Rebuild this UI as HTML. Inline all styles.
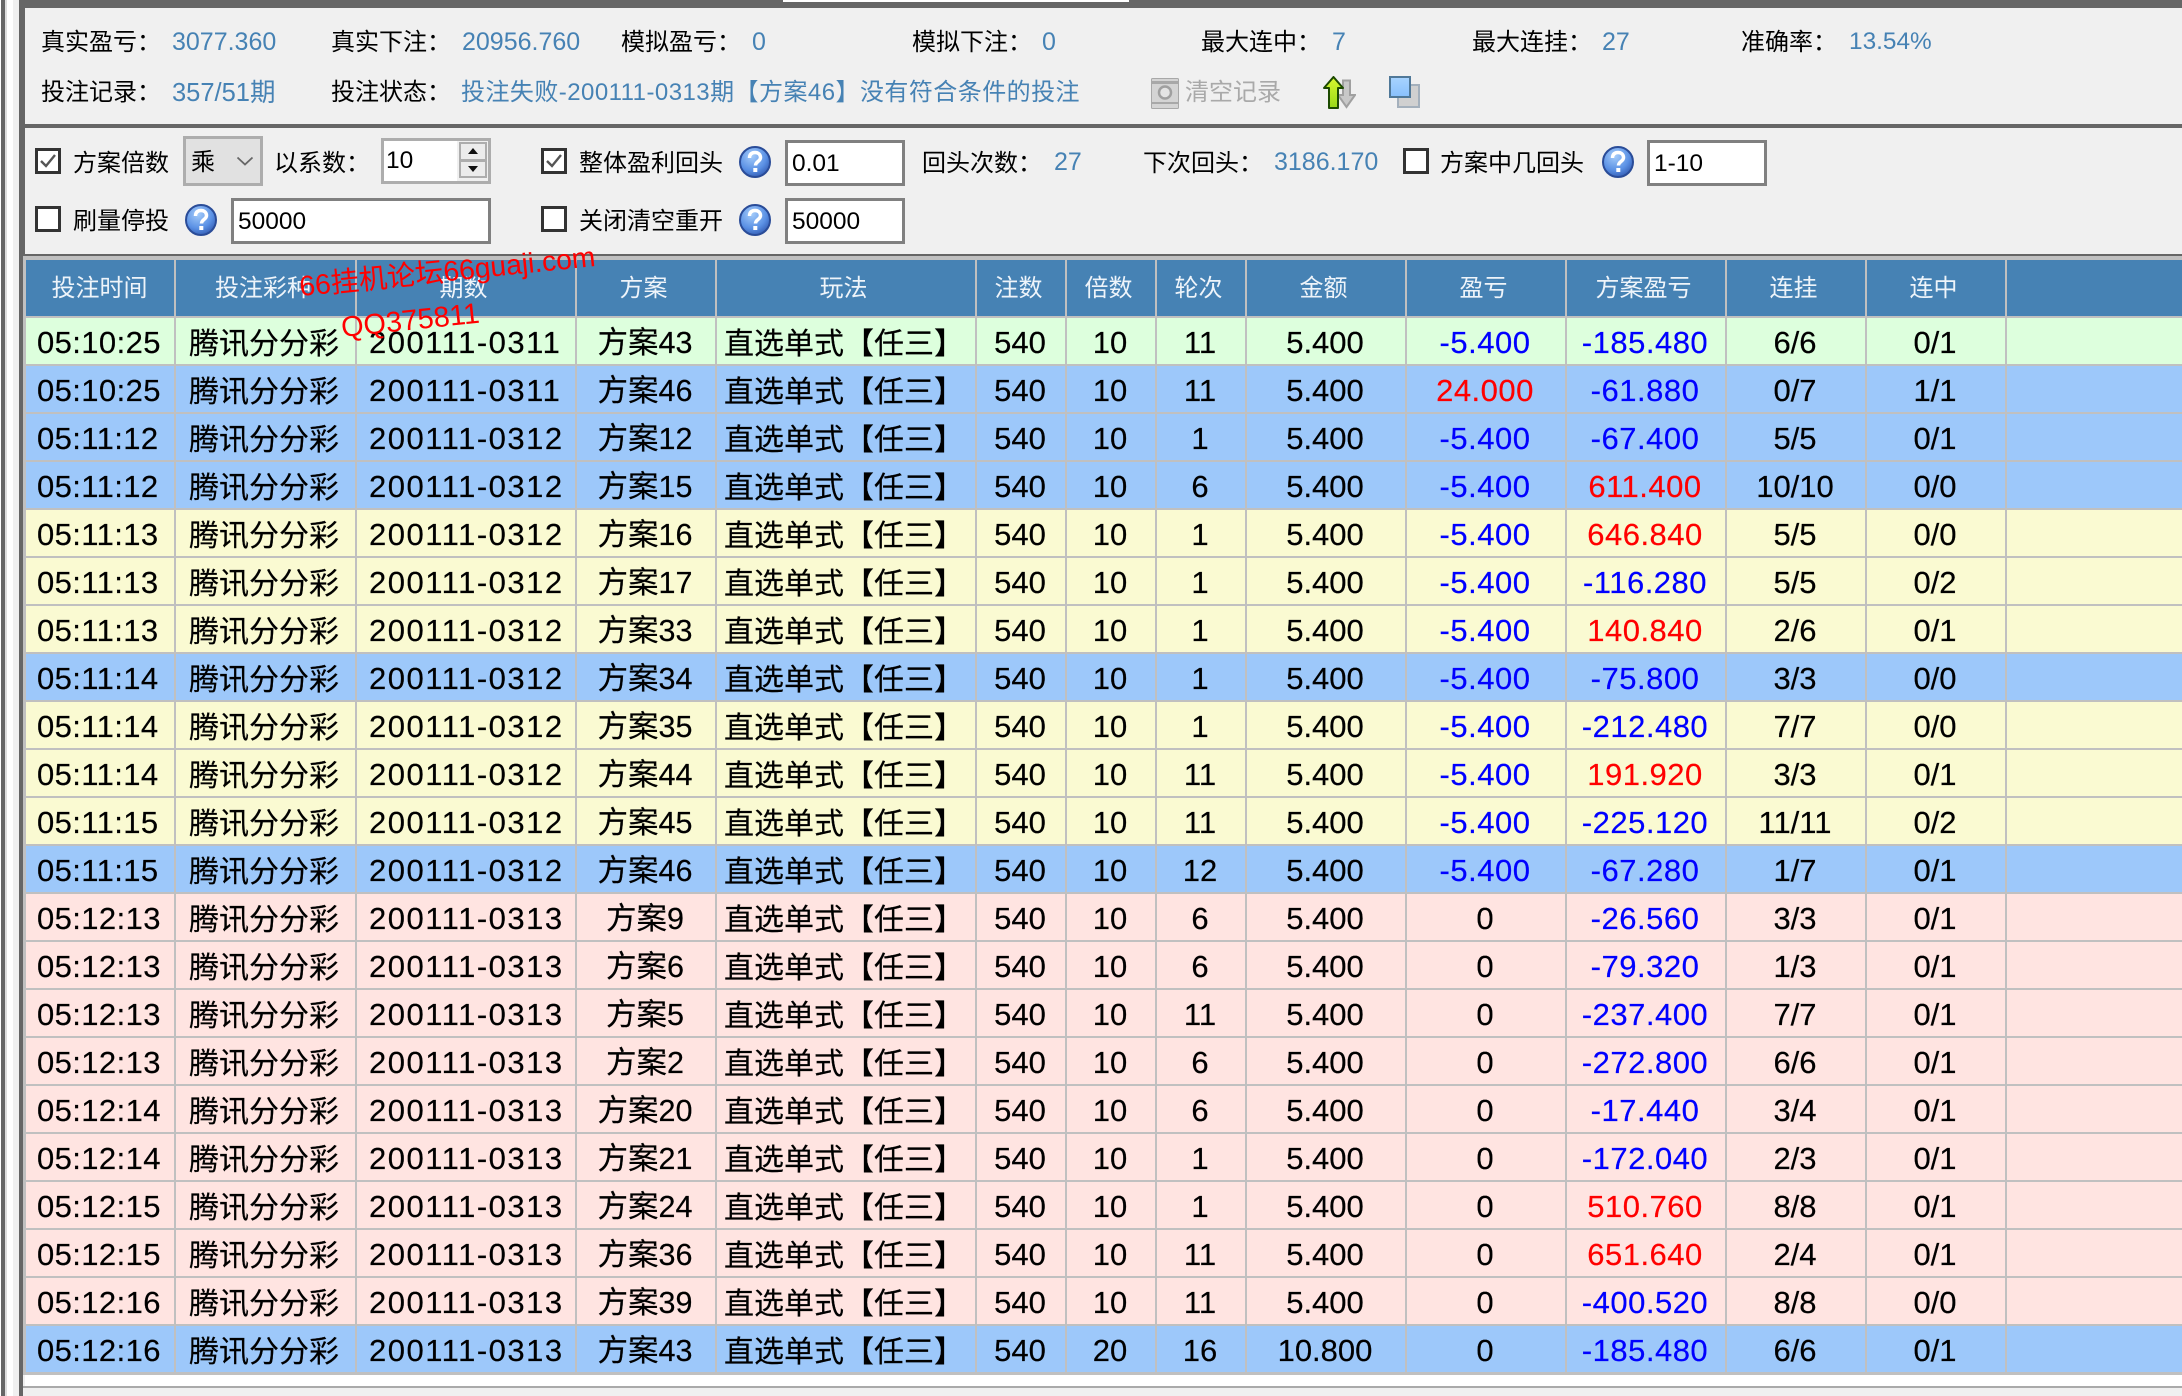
<!DOCTYPE html>
<html lang="zh">
<head>
<meta charset="utf-8">
<title>投注记录</title>
<style>
html,body{margin:0;padding:0;background:#fff}
#app{position:relative;width:2182px;height:1396px;overflow:hidden;background:#f0f0f0;font-family:"Liberation Sans","Noto Sans CJK SC",sans-serif;color:#000}
.r{position:absolute}
.t{position:absolute;white-space:nowrap;line-height:30px;height:30px;font-size:24px;margin-top:1px}
.v{color:#4682b4;font-size:25px;margin-top:0}
.cb{position:absolute;width:26px;height:26px;box-sizing:border-box;border:3px solid #333;background:#fff}
.cb svg{position:absolute;left:0;top:0}
.in{position:absolute;box-sizing:border-box;border:3px solid #808080;background:#fff;font-size:24.5px;line-height:42px;padding-left:4px;white-space:nowrap}
.help{position:absolute;width:32px;height:32px}
table{position:absolute;left:26px;top:260px;width:2156px;border-collapse:separate;border-spacing:0;table-layout:fixed}
th,td{box-sizing:border-box;padding:0;border-right:2px solid #c0c0c0;border-bottom:2px solid #c0c0c0;white-space:nowrap;overflow:hidden}
th:last-child,td:last-child{border-right:0}
th{height:58px;background:#4682b4;color:#eef4fa;font-weight:normal;font-size:24px;text-align:center;line-height:30px;padding-top:2px;padding-right:5px}
th:first-child{padding-right:1px}
td{height:48px;font-size:31px;text-align:center;padding-top:4px;padding-right:2px;line-height:42px;-webkit-text-stroke:.2px}
td.a{text-align:left;padding-left:11px;padding-right:0;font-size:31px;letter-spacing:.4px}
td.b{text-align:left;padding-left:13px;padding-right:0;font-size:30px;padding-top:7px;line-height:39px}
td.c{text-align:left;padding-left:12px;padding-right:0;font-size:31px;letter-spacing:1.5px}
td.d{font-size:30.5px}
td.e{text-align:left;padding-left:7px;padding-right:0;font-size:30px;padding-top:7px;line-height:39px}
td.n,td.o{letter-spacing:.5px}
tr.g td{background:#ddffdd}
tr.l td{background:#9dc8fa}
tr.y td{background:#fafad2}
tr.p td{background:#ffe4e1}
.n{color:#0000ff}
.o{color:#ff0000}
.w{position:absolute;color:#ff0000;line-height:32px;white-space:nowrap;transform-origin:left bottom}
</style>
</head>
<body>
<div id="app">
  <!-- left chrome -->
  <div class="r" style="left:0;top:0;width:1px;height:1396px;background:#fff"></div>
  <div class="r" style="left:1px;top:0;width:4px;height:1396px;background:#666"></div>
  <div class="r" style="left:5px;top:0;width:2px;height:1396px;background:#ddd"></div>
  <div class="r" style="left:7px;top:0;width:6px;height:1396px;background:#fff"></div>
  <div class="r" style="left:13px;top:0;width:6px;height:1396px;background:#f0f0f0"></div>
  <div class="r" style="left:19px;top:0;width:6px;height:256px;background:#666"></div>
  <div class="r" style="left:19px;top:256px;width:4px;height:1140px;background:#666"></div>
  <div class="r" style="left:23px;top:256px;width:3px;height:1119px;background:#c0c0c0"></div>
  <!-- top bar -->
  <div class="r" style="left:19px;top:0;width:2163px;height:8px;background:#666"></div>
  <div class="r" style="left:783px;top:0;width:346px;height:2px;background:#fff"></div>
  <div class="r" style="left:25px;top:124px;width:2157px;height:4px;background:#666"></div>
  <div class="r" style="left:25px;top:254px;width:2157px;height:2px;background:#666"></div>
  <div class="r" style="left:25px;top:256px;width:2157px;height:4px;background:#c0c0c0"></div>

  <!-- info row 1 -->
  <span class="t" style="left:41px;top:27px">真实盈亏：</span><span class="t v" style="left:172px;top:27px">3077.360</span>
  <span class="t" style="left:331px;top:27px">真实下注：</span><span class="t v" style="left:462px;top:27px">20956.760</span>
  <span class="t" style="left:621px;top:27px">模拟盈亏：</span><span class="t v" style="left:752px;top:27px">0</span>
  <span class="t" style="left:912px;top:27px">模拟下注：</span><span class="t v" style="left:1042px;top:27px">0</span>
  <span class="t" style="left:1201px;top:27px">最大连中：</span><span class="t v" style="left:1332px;top:27px">7</span>
  <span class="t" style="left:1472px;top:27px">最大连挂：</span><span class="t v" style="left:1602px;top:27px">27</span>
  <span class="t" style="left:1741px;top:27px">准确率：</span><span class="t v" style="left:1849px;top:27px;font-size:24.4px">13.54%</span>
  <!-- info row 2 -->
  <span class="t" style="left:41px;top:77px">投注记录：</span><span class="t v" style="left:172px;top:78px;font-size:25.5px">357/51期</span>
  <span class="t" style="left:331px;top:77px">投注状态：</span><span class="t v" style="left:461px;top:78px;font-size:24px;letter-spacing:.45px">投注失败-200111-0313期【方案46】没有符合条件的投注</span>

  <svg class="r" style="left:1151px;top:78px" width="28" height="31" viewBox="0 0 28 31">
    <rect x="0.5" y="0.5" width="27" height="30" rx="1" fill="#d4d4d4" stroke="#a8a8a8"/>
    <rect x="1" y="3" width="26" height="3" fill="#a8a8a8"/>
    <rect x="1" y="24" width="26" height="2" fill="#a8a8a8"/>
    <circle cx="14" cy="14.5" r="6" fill="#e4e4e4" stroke="#a0a0a0" stroke-width="2.5"/>
  </svg>
  <span class="t" style="left:1185px;top:77px;color:#a9a9a9">清空记录</span>

  <svg class="r" style="left:1323px;top:76px" width="33" height="33" viewBox="0 0 33 33">
    <defs>
      <linearGradient id="ga" x1="0" y1="0" x2="0" y2="1"><stop offset="0" stop-color="#d8f830"/><stop offset="1" stop-color="#98d818"/></linearGradient>
      <linearGradient id="gs" x1="0" y1="0" x2="0" y2="1"><stop offset="0" stop-color="#a8d4ff"/><stop offset="1" stop-color="#88c0fc"/></linearGradient>
      <radialGradient id="gh" cx="0.4" cy="0.3" r="0.8"><stop offset="0" stop-color="#a4ccfa"/><stop offset="0.6" stop-color="#5a90e4"/><stop offset="1" stop-color="#2a50a8"/></radialGradient>
    </defs>
    <path d="M20 3.5h7v14.5h5l-8.500 12-8.500-12h5z" transform="translate(0,1)" fill="#c8c8c8" stroke="#a0a0a0" stroke-width="2"/>
    <path d="M10.500 1L20 12h-5v20H6V12H1z" fill="url(#ga)" stroke="#1c4a00" stroke-width="2" stroke-linejoin="round"/>
  </svg>

  <svg class="r" style="left:1389px;top:76px" width="31" height="33" viewBox="0 0 31 33">
    <rect x="9" y="9" width="21" height="22" fill="#d0d0d0" stroke="#a4b0bc" stroke-width="2"/>
    <rect x="1" y="1" width="20" height="20" fill="url(#gs)" stroke="#507898" stroke-width="2"/>
  </svg>

  <!-- controls row 1 -->
  <div class="cb" style="left:35px;top:148px"><svg width="20" height="20" viewBox="0 0 20 20"><path d="M3 10l5 5 9-11" fill="none" stroke="#555" stroke-width="2.400"/></svg></div>
  <span class="t" style="left:73px;top:148px">方案倍数</span>
  <div class="r" style="left:183px;top:136px;width:80px;height:50px;box-sizing:border-box;border:3px solid #adadad;background:#e1e1e1"></div>
  <span class="t" style="left:191px;top:147px">乘</span>
  <svg class="r" style="left:236px;top:155px" width="18" height="12" viewBox="0 0 18 12"><path d="M1.500 2.500L9 9.500l7.500-7" fill="none" stroke="#666" stroke-width="1.800"/></svg>
  <span class="t" style="left:274px;top:148px">以系数：</span>
  <div class="r" style="left:381px;top:138px;width:110px;height:46px;box-sizing:border-box;border:3px solid #adadad;background:#fff"></div>
  <span class="t" style="left:386px;top:145px;font-size:24.500px">10</span>
  <div class="r" style="left:457px;top:141px;width:31px;height:40px;background:#f0f0f0"></div>
  <div class="r" style="left:459px;top:142px;width:28px;height:19px;box-sizing:border-box;border:2.500px solid #adadad;background:#ececec"></div>
  <div class="r" style="left:459px;top:160px;width:28px;height:18px;box-sizing:border-box;border:2.500px solid #adadad;background:#ececec"></div>
  <svg class="r" style="left:466px;top:147px" width="14" height="28" viewBox="0 0 14 28"><path d="M7 1l5 6H2z" fill="#111"/><path d="M2 19h10l-5 6z" fill="#111"/></svg>
  <div class="cb" style="left:541px;top:148px"><svg width="20" height="20" viewBox="0 0 20 20"><path d="M3 10l5 5 9-11" fill="none" stroke="#555" stroke-width="2.400"/></svg></div>
  <span class="t" style="left:579px;top:148px">整体盈利回头</span>
  <svg class="help" style="left:739px;top:146px" viewBox="0 0 32 32"><circle cx="16" cy="16" r="15" fill="url(#gh)" stroke="#2a4c98" stroke-width="2"/><path d="M10.500 12c0-4 2.500-5.500 5.500-5.500s5.500 1.800 5.500 5c0 4-5 4-5 8" fill="none" stroke="#fff" stroke-width="3.500"/><rect x="14.300" y="22" width="4" height="4" fill="#fff"/></svg>
  <div class="in" style="left:785px;top:140px;width:120px;height:46px">0.01</div>
  <span class="t" style="left:922px;top:148px">回头次数：</span><span class="t v" style="left:1054px;top:147px">27</span>
  <span class="t" style="left:1143px;top:148px">下次回头：</span><span class="t v" style="left:1274px;top:147px">3186.170</span>
  <div class="cb" style="left:1403px;top:148px"></div>
  <span class="t" style="left:1440px;top:148px">方案中几回头</span>
  <svg class="help" style="left:1602px;top:146px" viewBox="0 0 32 32"><circle cx="16" cy="16" r="15" fill="url(#gh)" stroke="#2a4c98" stroke-width="2"/><path d="M10.500 12c0-4 2.500-5.500 5.500-5.500s5.500 1.800 5.500 5c0 4-5 4-5 8" fill="none" stroke="#fff" stroke-width="3.500"/><rect x="14.300" y="22" width="4" height="4" fill="#fff"/></svg>
  <div class="in" style="left:1647px;top:140px;width:120px;height:46px">1-10</div>

  <!-- controls row 2 -->
  <div class="cb" style="left:35px;top:206px"></div>
  <span class="t" style="left:73px;top:206px">刷量停投</span>
  <svg class="help" style="left:185px;top:204px" viewBox="0 0 32 32"><circle cx="16" cy="16" r="15" fill="url(#gh)" stroke="#2a4c98" stroke-width="2"/><path d="M10.500 12c0-4 2.500-5.500 5.500-5.500s5.500 1.800 5.500 5c0 4-5 4-5 8" fill="none" stroke="#fff" stroke-width="3.500"/><rect x="14.300" y="22" width="4" height="4" fill="#fff"/></svg>
  <div class="in" style="left:231px;top:198px;width:260px;height:46px">50000</div>
  <div class="cb" style="left:541px;top:206px"></div>
  <span class="t" style="left:579px;top:206px">关闭清空重开</span>
  <svg class="help" style="left:739px;top:204px" viewBox="0 0 32 32"><circle cx="16" cy="16" r="15" fill="url(#gh)" stroke="#2a4c98" stroke-width="2"/><path d="M10.500 12c0-4 2.500-5.500 5.500-5.500s5.500 1.800 5.500 5c0 4-5 4-5 8" fill="none" stroke="#fff" stroke-width="3.500"/><rect x="14.300" y="22" width="4" height="4" fill="#fff"/></svg>
  <div class="in" style="left:785px;top:198px;width:120px;height:46px">50000</div>

  <!-- white strip under table -->
  <div class="r" style="left:25px;top:1374px;width:2157px;height:1px;background:#c0c0c0"></div>
  <div class="r" style="left:25px;top:1375px;width:2157px;height:11px;background:#fff"></div>
  <div class="r" style="left:23px;top:1386px;width:2159px;height:2px;background:#aaa"></div>

  <table>
    <colgroup>
      <col style="width:150px"><col style="width:181px"><col style="width:220px"><col style="width:140px"><col style="width:260px"><col style="width:90px"><col style="width:90px"><col style="width:90px"><col style="width:160px"><col style="width:160px"><col style="width:160px"><col style="width:140px"><col style="width:140px"><col>
    </colgroup>
    <thead><tr><th>投注时间</th><th>投注彩种</th><th>期数</th><th>方案</th><th>玩法</th><th>注数</th><th>倍数</th><th>轮次</th><th>金额</th><th>盈亏</th><th>方案盈亏</th><th>连挂</th><th>连中</th><th></th></tr></thead>
    <tbody>
      <tr class="g"><td class="a">05:10:25</td><td class="b">腾讯分分彩</td><td class="c">200111-0311</td><td class="d">方案43</td><td class="e">直选单式【任三】</td><td>540</td><td>10</td><td>11</td><td>5.400</td><td class="n">-5.400</td><td class="n">-185.480</td><td>6/6</td><td>0/1</td><td></td></tr>
      <tr class="l"><td class="a">05:10:25</td><td class="b">腾讯分分彩</td><td class="c">200111-0311</td><td class="d">方案46</td><td class="e">直选单式【任三】</td><td>540</td><td>10</td><td>11</td><td>5.400</td><td class="o">24.000</td><td class="n">-61.880</td><td>0/7</td><td>1/1</td><td></td></tr>
      <tr class="l"><td class="a">05:11:12</td><td class="b">腾讯分分彩</td><td class="c">200111-0312</td><td class="d">方案12</td><td class="e">直选单式【任三】</td><td>540</td><td>10</td><td>1</td><td>5.400</td><td class="n">-5.400</td><td class="n">-67.400</td><td>5/5</td><td>0/1</td><td></td></tr>
      <tr class="l"><td class="a">05:11:12</td><td class="b">腾讯分分彩</td><td class="c">200111-0312</td><td class="d">方案15</td><td class="e">直选单式【任三】</td><td>540</td><td>10</td><td>6</td><td>5.400</td><td class="n">-5.400</td><td class="o">611.400</td><td>10/10</td><td>0/0</td><td></td></tr>
      <tr class="y"><td class="a">05:11:13</td><td class="b">腾讯分分彩</td><td class="c">200111-0312</td><td class="d">方案16</td><td class="e">直选单式【任三】</td><td>540</td><td>10</td><td>1</td><td>5.400</td><td class="n">-5.400</td><td class="o">646.840</td><td>5/5</td><td>0/0</td><td></td></tr>
      <tr class="y"><td class="a">05:11:13</td><td class="b">腾讯分分彩</td><td class="c">200111-0312</td><td class="d">方案17</td><td class="e">直选单式【任三】</td><td>540</td><td>10</td><td>1</td><td>5.400</td><td class="n">-5.400</td><td class="n">-116.280</td><td>5/5</td><td>0/2</td><td></td></tr>
      <tr class="y"><td class="a">05:11:13</td><td class="b">腾讯分分彩</td><td class="c">200111-0312</td><td class="d">方案33</td><td class="e">直选单式【任三】</td><td>540</td><td>10</td><td>1</td><td>5.400</td><td class="n">-5.400</td><td class="o">140.840</td><td>2/6</td><td>0/1</td><td></td></tr>
      <tr class="l"><td class="a">05:11:14</td><td class="b">腾讯分分彩</td><td class="c">200111-0312</td><td class="d">方案34</td><td class="e">直选单式【任三】</td><td>540</td><td>10</td><td>1</td><td>5.400</td><td class="n">-5.400</td><td class="n">-75.800</td><td>3/3</td><td>0/0</td><td></td></tr>
      <tr class="y"><td class="a">05:11:14</td><td class="b">腾讯分分彩</td><td class="c">200111-0312</td><td class="d">方案35</td><td class="e">直选单式【任三】</td><td>540</td><td>10</td><td>1</td><td>5.400</td><td class="n">-5.400</td><td class="n">-212.480</td><td>7/7</td><td>0/0</td><td></td></tr>
      <tr class="y"><td class="a">05:11:14</td><td class="b">腾讯分分彩</td><td class="c">200111-0312</td><td class="d">方案44</td><td class="e">直选单式【任三】</td><td>540</td><td>10</td><td>11</td><td>5.400</td><td class="n">-5.400</td><td class="o">191.920</td><td>3/3</td><td>0/1</td><td></td></tr>
      <tr class="y"><td class="a">05:11:15</td><td class="b">腾讯分分彩</td><td class="c">200111-0312</td><td class="d">方案45</td><td class="e">直选单式【任三】</td><td>540</td><td>10</td><td>11</td><td>5.400</td><td class="n">-5.400</td><td class="n">-225.120</td><td>11/11</td><td>0/2</td><td></td></tr>
      <tr class="l"><td class="a">05:11:15</td><td class="b">腾讯分分彩</td><td class="c">200111-0312</td><td class="d">方案46</td><td class="e">直选单式【任三】</td><td>540</td><td>10</td><td>12</td><td>5.400</td><td class="n">-5.400</td><td class="n">-67.280</td><td>1/7</td><td>0/1</td><td></td></tr>
      <tr class="p"><td class="a">05:12:13</td><td class="b">腾讯分分彩</td><td class="c">200111-0313</td><td class="d">方案9</td><td class="e">直选单式【任三】</td><td>540</td><td>10</td><td>6</td><td>5.400</td><td>0</td><td class="n">-26.560</td><td>3/3</td><td>0/1</td><td></td></tr>
      <tr class="p"><td class="a">05:12:13</td><td class="b">腾讯分分彩</td><td class="c">200111-0313</td><td class="d">方案6</td><td class="e">直选单式【任三】</td><td>540</td><td>10</td><td>6</td><td>5.400</td><td>0</td><td class="n">-79.320</td><td>1/3</td><td>0/1</td><td></td></tr>
      <tr class="p"><td class="a">05:12:13</td><td class="b">腾讯分分彩</td><td class="c">200111-0313</td><td class="d">方案5</td><td class="e">直选单式【任三】</td><td>540</td><td>10</td><td>11</td><td>5.400</td><td>0</td><td class="n">-237.400</td><td>7/7</td><td>0/1</td><td></td></tr>
      <tr class="p"><td class="a">05:12:13</td><td class="b">腾讯分分彩</td><td class="c">200111-0313</td><td class="d">方案2</td><td class="e">直选单式【任三】</td><td>540</td><td>10</td><td>6</td><td>5.400</td><td>0</td><td class="n">-272.800</td><td>6/6</td><td>0/1</td><td></td></tr>
      <tr class="p"><td class="a">05:12:14</td><td class="b">腾讯分分彩</td><td class="c">200111-0313</td><td class="d">方案20</td><td class="e">直选单式【任三】</td><td>540</td><td>10</td><td>6</td><td>5.400</td><td>0</td><td class="n">-17.440</td><td>3/4</td><td>0/1</td><td></td></tr>
      <tr class="p"><td class="a">05:12:14</td><td class="b">腾讯分分彩</td><td class="c">200111-0313</td><td class="d">方案21</td><td class="e">直选单式【任三】</td><td>540</td><td>10</td><td>1</td><td>5.400</td><td>0</td><td class="n">-172.040</td><td>2/3</td><td>0/1</td><td></td></tr>
      <tr class="p"><td class="a">05:12:15</td><td class="b">腾讯分分彩</td><td class="c">200111-0313</td><td class="d">方案24</td><td class="e">直选单式【任三】</td><td>540</td><td>10</td><td>1</td><td>5.400</td><td>0</td><td class="o">510.760</td><td>8/8</td><td>0/1</td><td></td></tr>
      <tr class="p"><td class="a">05:12:15</td><td class="b">腾讯分分彩</td><td class="c">200111-0313</td><td class="d">方案36</td><td class="e">直选单式【任三】</td><td>540</td><td>10</td><td>11</td><td>5.400</td><td>0</td><td class="o">651.640</td><td>2/4</td><td>0/1</td><td></td></tr>
      <tr class="p"><td class="a">05:12:16</td><td class="b">腾讯分分彩</td><td class="c">200111-0313</td><td class="d">方案39</td><td class="e">直选单式【任三】</td><td>540</td><td>10</td><td>11</td><td>5.400</td><td>0</td><td class="n">-400.520</td><td>8/8</td><td>0/0</td><td></td></tr>
      <tr class="l"><td class="a">05:12:16</td><td class="b">腾讯分分彩</td><td class="c">200111-0313</td><td class="d">方案43</td><td class="e">直选单式【任三】</td><td>540</td><td>20</td><td>16</td><td>10.800</td><td>0</td><td class="n">-185.480</td><td>6/6</td><td>0/1</td><td></td></tr>
    </tbody>
  </table>

  <!-- watermark -->
  <div class="w" style="left:301px;top:270px;font-size:28.3px;transform:rotate(-5.800deg)">66挂机论坛66guaji.com</div>
  <div class="w" style="left:343px;top:312px;font-size:28.8px;transform:rotate(-6deg)">QQ375811</div>
</div>
</body>
</html>
